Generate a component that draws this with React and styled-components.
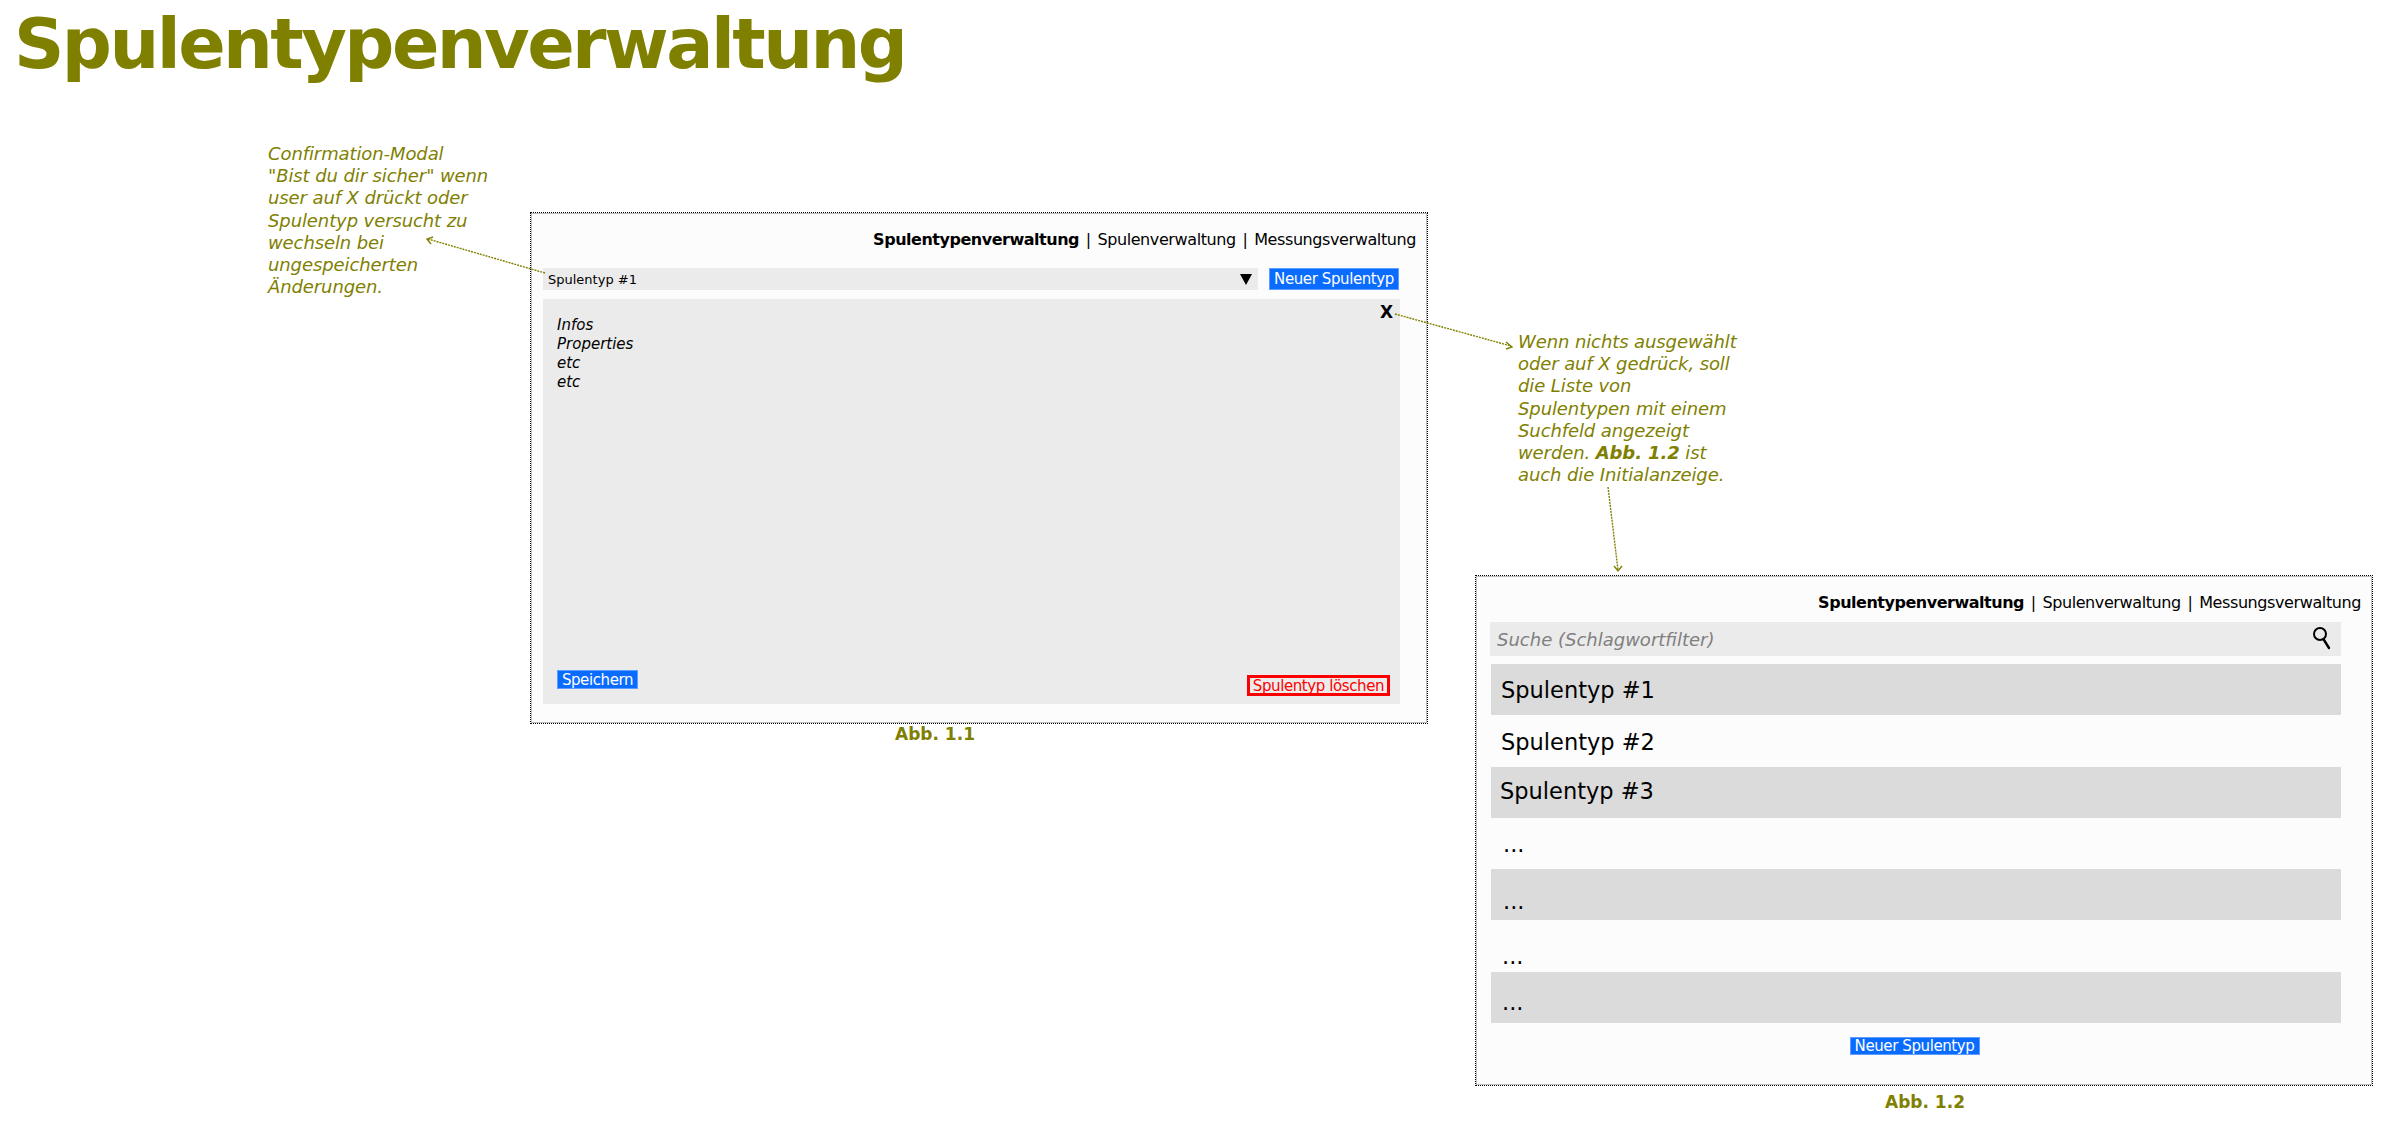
import styled, { createGlobalStyle } from "styled-components"

const olive = "#808000"
const blue = "#0a6cff"

const GlobalStyle = createGlobalStyle`
  html, body {
    margin: 0;
    padding: 0;
    background: #fff;
  }
  body {
    font-family: "DejaVu Sans", Verdana, sans-serif;
  }
`

const Canvas = styled.div`
  position: relative;
  width: 2400px;
  height: 1122px;
  overflow: hidden;
`

const Title = styled.h1`
  margin: 0;
  padding: 0 0 0 14px;
  font-size: 70px;
  line-height: 88px;
  font-weight: 700;
  letter-spacing: -2.55px;
  color: ${olive};
`

const Note = styled.p`
  position: absolute;
  left: ${(p) => p.$x}px;
  top: ${(p) => p.$y}px;
  margin: 0;
  font-size: 18px;
  line-height: 22.2px;
  font-style: italic;
  letter-spacing: -0.1px;
  white-space: nowrap;
  color: ${olive};
`

const Caption = styled.div`
  position: absolute;
  left: ${(p) => p.$x}px;
  top: ${(p) => p.$y}px;
  font-size: 17px;
  line-height: 20px;
  font-weight: 700;
  color: ${olive};
`

const Arrows = styled.svg`
  position: absolute;
  left: 0;
  top: 0;
  z-index: 2;
  pointer-events: none;
`

const Frame = styled.section`
  position: absolute;
  left: ${(p) => p.$x}px;
  top: ${(p) => p.$y}px;
  width: 898px;
  height: ${(p) => p.$h}px;
  box-sizing: border-box;
  display: flex;
  flex-direction: column;
  padding: 1px;
  background: #fcfcfc;
  border: 1px dotted #000;
  box-shadow: inset 0 0 0 1px rgba(0, 0, 0, 0.25);
`

const Nav = styled.nav`
  align-self: flex-end;
  margin: 16px 10px 0 0;
  font-size: 16px;
  line-height: 20px;
  letter-spacing: -0.4px;
  word-spacing: 2px;
  color: #000;
  b {
    font-weight: 700;
    letter-spacing: -0.48px;
  }
`

const SelectRow = styled.div`
  display: flex;
  gap: 11px;
  margin: 18px 27px 0 11px;
`

const Select = styled.div`
  flex: 1;
  height: 22px;
  display: flex;
  align-items: center;
  justify-content: space-between;
  padding: 0 6px 0 5px;
  background: #ebebeb;
  font-size: 13px;
  color: #000;
`

const Triangle = styled.span`
  width: 0;
  height: 0;
  border-left: 6px solid transparent;
  border-right: 6px solid transparent;
  border-top: 11px solid #000;
`

const Button = styled.div`
  box-sizing: border-box;
  width: ${(p) => p.$w}px;
  height: ${(p) => p.$h}px;
  display: flex;
  align-items: center;
  justify-content: center;
  background: ${blue};
  border: 1px solid #5c9dff;
  color: #fff;
  font-size: 15px;
  letter-spacing: -0.4px;
  white-space: nowrap;
`

const Panel = styled.div`
  position: relative;
  flex: 1;
  display: flex;
  flex-direction: column;
  justify-content: space-between;
  margin: 9px 26px 18px 11px;
  padding: 17px 10px 8px 14px;
  background: #ebebeb;
`

const Close = styled.span`
  position: absolute;
  right: 7px;
  top: 3px;
  font-size: 17px;
  font-weight: 700;
  color: #000;
`

const Details = styled.div`
  font-size: 15px;
  line-height: 19px;
  font-style: italic;
  color: #000;
`

const PanelFooter = styled.div`
  display: flex;
  justify-content: space-between;
  align-items: flex-start;
`

const DeleteButton = styled.div`
  box-sizing: border-box;
  width: 143px;
  height: 21px;
  margin-top: 5px;
  display: flex;
  align-items: center;
  justify-content: center;
  border: 3px solid #ff0000;
  color: #ff0000;
  font-size: 15px;
  letter-spacing: -0.4px;
  white-space: nowrap;
`

const SearchBar = styled.div`
  height: 34px;
  display: flex;
  align-items: center;
  justify-content: space-between;
  margin: 9px 30px 0 13px;
  padding: 0 9px 0 7px;
  background: #ebebeb;
  font-size: 18px;
  font-style: italic;
  color: #808080;
`

const List = styled.div`
  display: flex;
  flex-direction: column;
  margin: 8px 30px 0 14px;
`

const Row = styled.div`
  box-sizing: border-box;
  height: 51.3px;
  padding: ${(p) => p.$top}px 0 0 ${(p) => p.$left}px;
  background: ${(p) => (p.$shaded ? "#dbdbdb" : "transparent")};
  font-size: 22.5px;
  line-height: 30px;
  color: #000;
`

const ListFooter = styled.div`
  display: flex;
  justify-content: center;
  margin: 14px 33px 0 14px;
`

const rows = [
  { text: "Spulentyp #1", left: 10, top: 11, shaded: true },
  { text: "Spulentyp #2", left: 10, top: 12 },
  { text: "Spulentyp #3", left: 9, top: 9, shaded: true },
  { text: "...", left: 12, top: 11 },
  { text: "...", left: 12, top: 17, shaded: true },
  { text: "...", left: 11, top: 21 },
  { text: "...", left: 11, top: 15, shaded: true },
]

const SearchIcon = () => (
  <svg width="20" height="24" viewBox="0 0 20 24">
    <circle cx="8" cy="7" r="6" fill="none" stroke="#000" strokeWidth="2" />
    <path d="M12 13 L17 21" stroke="#000" strokeWidth="2.4" strokeLinecap="round" />
  </svg>
)

const Arrow = ({ d, head }) => (
  <g fill="none" stroke={olive} strokeWidth="1.4">
    <path d={d} strokeDasharray="2 1" />
    <path d={head} />
  </g>
)

export default function App() {
  return (
    <Canvas>
      <GlobalStyle />
      <Title>Spulentypenverwaltung</Title>

      <Note $x={268} $y={143}>
        Confirmation-Modal
        <br />
        "Bist du dir sicher" wenn
        <br />
        user auf X drückt oder
        <br />
        Spulentyp versucht zu
        <br />
        wechseln bei
        <br />
        ungespeicherten
        <br />
        Änderungen.
      </Note>

      <Frame $x={530} $y={212} $h={512}>
        <Nav>
          <b>Spulentypenverwaltung</b> | Spulenverwaltung | Messungsverwaltung
        </Nav>
        <SelectRow>
          <Select>
            Spulentyp #1
            <Triangle />
          </Select>
          <Button $w={130} $h={22}>Neuer Spulentyp</Button>
        </SelectRow>
        <Panel>
          <Close>X</Close>
          <Details>
            Infos
            <br />
            Properties
            <br />
            etc
            <br />
            etc
          </Details>
          <PanelFooter>
            <Button $w={81} $h={19}>Speichern</Button>
            <DeleteButton>Spulentyp löschen</DeleteButton>
          </PanelFooter>
        </Panel>
      </Frame>
      <Caption $x={895} $y={724}>Abb. 1.1</Caption>

      <Note $x={1518} $y={331}>
        Wenn nichts ausgewählt
        <br />
        oder auf X gedrück, soll
        <br />
        die Liste von
        <br />
        Spulentypen mit einem
        <br />
        Suchfeld angezeigt
        <br />
        werden. <b>Abb. 1.2</b> ist
        <br />
        auch die Initialanzeige.
      </Note>

      <Frame $x={1475} $y={575} $h={511}>
        <Nav>
          <b>Spulentypenverwaltung</b> | Spulenverwaltung | Messungsverwaltung
        </Nav>
        <SearchBar>
          Suche (Schlagwortfilter)
          <SearchIcon />
        </SearchBar>
        <List>
          {rows.map((row, i) => (
            <Row key={i} $left={row.left} $top={row.top} $shaded={row.shaded}>
              {row.text}
            </Row>
          ))}
        </List>
        <ListFooter>
          <Button $w={130} $h={18}>Neuer Spulentyp</Button>
        </ListFooter>
      </Frame>
      <Caption $x={1885} $y={1092}>Abb. 1.2</Caption>

      <Arrows width="2400" height="1122">
        <Arrow d="M545 273 L428 239" head="M433 237 L427 239 L431 244" />
        <Arrow d="M1395 314 L1511 346" head="M1506 342 L1512 347 L1506 349" />
        <Arrow d="M1608 487 L1618 570" head="M1614 566 L1618 571 L1622 566" />
      </Arrows>
    </Canvas>
  )
}
